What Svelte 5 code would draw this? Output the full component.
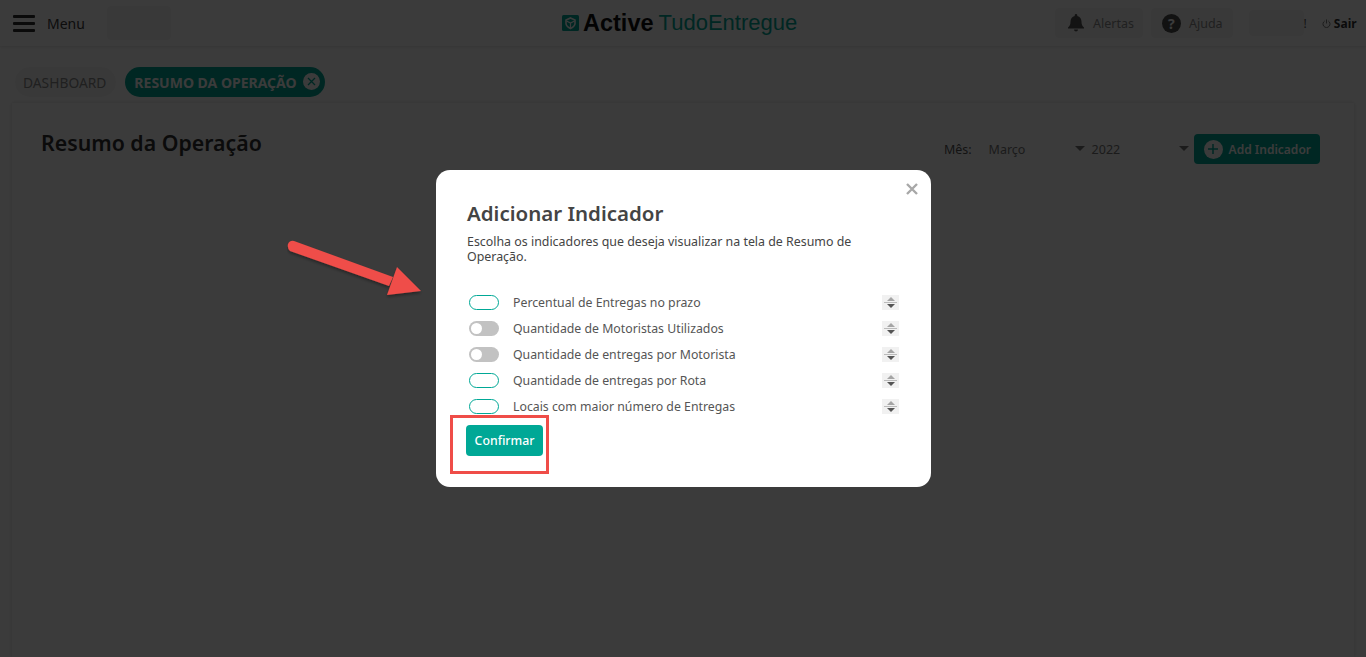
<script>
  const indicadores = [
    { nome: 'Percentual de Entregas no prazo', ativo: true },
    { nome: 'Quantidade de Motoristas Utilizados', ativo: false },
    { nome: 'Quantidade de entregas por Motorista', ativo: false },
    { nome: 'Quantidade de entregas por Rota', ativo: true },
    { nome: 'Locais com maior número de Entregas', ativo: true }
  ];
</script>

<div class="page">
  <header class="topo">
    <div class="esq">
      <span class="burger"><i></i><i></i><i></i></span>
      <span class="menu">Menu</span>
      <span class="borrao b1"></span>
    </div>
    <div class="logo">
      <svg width="17" height="16" viewBox="0 0 17 16">
        <rect width="17" height="16" rx="1.5" fill="#00a896" />
        <path d="M8.500 3l4.500 2v3.500C13 11 10.500 12.500 8.500 13.500 6.500 12.500 4 11 4 8.500V5z" fill="none" stroke="#fff" stroke-width="1.600" />
        <path d="M8.500 8v5M4.500 6l4 2 4-2" fill="none" stroke="#fff" stroke-width="1.200" />
      </svg>
      <b>Active</b><span>TudoEntregue</span>
    </div>
    <div class="dir">
      <span class="acao">
        <svg width="18" height="20" viewBox="0 0 18 20"><path d="M9 1a1.300 1.300 0 0 1 1.300 1.300v.6C13 3.500 14.500 5.800 14.500 8.500c0 3.500 1 4.800 2.500 6v1H1v-1c1.500-1.200 2.500-2.500 2.500-6 0-2.700 1.500-5 4.200-5.600v-.6A1.300 1.300 0 0 1 9 1zM7 16.500h4a2 2 0 0 1-4 0z" fill="#555" /></svg>
        Alertas
      </span>
      <span class="acao ajuda-box">
        <span class="ajuda">?</span>
        Ajuda
      </span>
      <span class="borrao b2"></span>
      <span class="excl">!</span>
      <span class="sair">
        <svg width="9" height="9" viewBox="0 0 10 10"><path d="M3 2.200a3.900 3.900 0 1 0 4 0M5 .5v4.500" fill="none" stroke="#777" stroke-width="1.100" /></svg>
        <b>Sair</b>
      </span>
    </div>
  </header>

  <nav class="abas">
    <span class="aba">DASHBOARD</span>
    <span class="aba atual">
      RESUMO DA OPERAÇÃO
      <span class="fechar-aba">
        <svg width="9" height="9" viewBox="0 0 9 9"><path d="M1 1l7 7M8 1l-7 7" stroke="#00a896" stroke-width="1.300" /></svg>
      </span>
    </span>
  </nav>

  <section class="cartao">
    <h1>Resumo da Operação</h1>
    <div class="filtros">
      <span class="rotulo">Mês:</span>
      <span class="sel mes">Março<i></i></span>
      <span class="sel ano">2022<i></i></span>
      <span class="add">
        <span class="mais">
          <svg width="10" height="10" viewBox="0 0 10 10"><path d="M5 0v10M0 5h10" stroke="#00a896" stroke-width="1.500" /></svg>
        </span>
        Add Indicador
      </span>
    </div>
  </section>
</div>

<div class="overlay"></div>

<div class="modal">
  <span class="fechar">
    <svg width="12" height="12" viewBox="0 0 12 12"><path d="M1 1l10 10M11 1L1 11" stroke="#a8a8a8" stroke-width="2.400" /></svg>
  </span>
  <h2>Adicionar Indicador</h2>
  <p>Escolha os indicadores que deseja visualizar na tela de Resumo de Operação.</p>
  <ul>
    {#each indicadores as item}
      <li>
        <span class="toggle" class:ativo={item.ativo}></span>
        <span class="nome">{item.nome}</span>
        <span class="ordem"><i class="cima"></i><b></b><i class="baixo"></i></span>
      </li>
    {/each}
  </ul>
  <button>Confirmar</button>
</div>

<!-- anotacoes em vermelho por cima do print -->
<span class="marca"></span>
<svg class="seta" width="150" height="70" viewBox="0 0 150 70">
  <defs>
    <filter id="sombra" x="-10%" y="-20%" width="120%" height="150%">
      <feDropShadow dx="0" dy="2" stdDeviation="1.500" flood-color="#000" flood-opacity="0.35" />
    </filter>
  </defs>
  <g filter="url(#sombra)" fill="#ef4d48">
    <path d="M7 1L106 37 102 46 3 11Q0 8 1 4 3 0 7 1z" />
    <path d="M110 27L134 51 100 55z" />
  </g>
</svg>

<style>
  :global(body) {
    margin: 0;
    font-family: "Noto Sans", "Open Sans", sans-serif;
    background: #fff;
    overflow: hidden;
  }

  .page {
    height: 657px;
    display: flex;
    flex-direction: column;
    background: #fff;
  }

  .topo {
    height: 46px;
    display: flex;
    align-items: center;
    box-shadow: 0 1px 3px rgba(0, 0, 0, 0.12);
    position: relative;
  }

  .esq {
    width: 562px;
    display: flex;
    align-items: center;
    padding-left: 13px;
    box-sizing: border-box;
  }

  .burger {
    width: 22px;
    display: flex;
    flex-direction: column;
    gap: 4px;
    margin-right: 12px;
  }

  .burger i {
    height: 3px;
    background: #2c2c2c;
    border-radius: 1px;
  }

  .menu {
    font-size: 14px;
    color: #3a3a3a;
  }

  .borrao {
    display: block;
    background: #f7f7f7;
    border-radius: 4px;
  }

  .b1 {
    width: 64px;
    height: 34px;
    margin-left: 22px;
  }

  .b2 {
    width: 55px;
    height: 26px;
    margin-left: 16px;
  }

  .logo {
    display: flex;
    align-items: center;
    gap: 4px;
    font-family: "Liberation Sans", sans-serif;
    font-size: 22px;
  }

  .logo b {
    color: #0f0f0f;
    font-weight: 700;
    font-size: 23.500px;
  }

  .logo span {
    color: #00a896;
    margin-left: 1px;
  }

  .dir {
    margin-left: auto;
    width: 311px;
    display: flex;
    align-items: center;
  }

  .acao {
    display: flex;
    align-items: center;
    gap: 8px;
    height: 30px;
    background: #f7f7f7;
    border-radius: 4px;
    padding: 0 9px 0 12px;
    margin-right: 8px;
    font-size: 12.500px;
    color: #8a8a8a;
  }

  .ajuda-box {
    padding: 0 10px 0 11px;
    margin-right: 0;
  }

  .ajuda {
    width: 19px;
    height: 19px;
    border-radius: 50%;
    background: #4e4e4e;
    color: #fff;
    font-size: 14px;
    font-weight: 700;
    display: flex;
    align-items: center;
    justify-content: center;
  }

  .excl {
    font-size: 12px;
    color: #555;
    margin-right: 15px;
  }

  .sair {
    display: flex;
    align-items: center;
    gap: 3px;
    font-size: 12px;
  }

  .sair b {
    color: #333;
  }

  .abas {
    display: flex;
    gap: 9px;
    padding: 21px 0 0 15px;
  }

  .aba {
    height: 30px;
    box-sizing: border-box;
    display: flex;
    align-items: center;
    padding: 1px 10px 0 8px;
    border-radius: 15px;
    background: #f7f7f7;
    color: #8a8a8a;
    font-size: 13.800px;
  }

  .atual {
    background: #00a896;
    color: #fff;
    font-weight: 700;
    font-size: 14px;
    gap: 6px;
    padding: 1px 5px 0 9px;
  }

  .fechar-aba {
    width: 17px;
    height: 17px;
    border-radius: 50%;
    background: #fff;
    display: flex;
    align-items: center;
    justify-content: center;
    margin-bottom: 2px;
  }

  .cartao {
    flex: 1;
    margin: 6px 12px 0 12px;
    box-shadow: 0 0 4px rgba(0, 0, 0, 0.15);
    display: flex;
    justify-content: space-between;
    align-items: flex-start;
    padding: 25px 34px 0 29px;
  }

  h1 {
    margin: 0;
    font-size: 21.300px;
    font-weight: 600;
    color: #333;
  }

  .filtros {
    display: flex;
    align-items: center;
    margin-top: 6px;
    font-size: 12.500px;
    color: #666;
  }

  .rotulo {
    margin-right: 17px;
    color: #555;
  }

  .sel {
    display: flex;
    align-items: center;
    justify-content: space-between;
    color: #777;
  }

  .sel i {
    border-left: 5px solid transparent;
    border-right: 5px solid transparent;
    border-top: 5px solid #777;
    margin-bottom: 2px;
  }

  .mes {
    width: 96px;
    margin-right: 7px;
  }

  .ano {
    width: 97px;
    margin-right: 5px;
  }

  .add {
    height: 30px;
    display: flex;
    align-items: center;
    gap: 6px;
    background: #00a896;
    color: #fff;
    border-radius: 4px;
    padding: 0 9px 0 10px;
    font-weight: 600;
    font-size: 12px;
  }

  .mais {
    width: 19px;
    height: 19px;
    border-radius: 50%;
    background: #fff;
    display: flex;
    align-items: center;
    justify-content: center;
  }

  .overlay {
    position: fixed;
    inset: 0;
    background: rgba(0, 0, 0, 0.77);
  }

  .modal {
    position: fixed;
    left: 436px;
    top: 170px;
    width: 495px;
    height: 317px;
    box-sizing: border-box;
    background: #fff;
    border-radius: 14px;
    padding: 30px 31px 0;
    color: #444;
  }

  .fechar {
    position: absolute;
    top: 13px;
    right: 13px;
    line-height: 0;
  }

  h2 {
    margin: 0;
    font-size: 20.500px;
    line-height: 26px;
    font-weight: 600;
    color: #444;
  }

  p {
    margin: 8px 0 0;
    font-size: 12.400px;
    line-height: 15px;
    color: #444;
  }

  ul {
    list-style: none;
    margin: 25px 1px 0 0;
    padding: 0;
  }

  li {
    height: 26px;
    display: flex;
    align-items: center;
    padding-left: 2px;
    font-size: 12.300px;
    color: #555;
  }

  .toggle {
    width: 30px;
    height: 15px;
    box-sizing: border-box;
    border-radius: 8px;
    background: #c2c2c2;
    position: relative;
    margin-right: 14px;
  }

  .toggle::after {
    content: "";
    position: absolute;
    left: 2px;
    top: 2px;
    width: 11px;
    height: 11px;
    border-radius: 50%;
    background: #fff;
  }

  .toggle.ativo {
    background: #fff;
    border: 1px solid #00a896;
  }

  .toggle.ativo::after {
    display: none;
  }

  .nome {
    flex: 1;
  }

  .ordem {
    width: 17px;
    height: 15px;
    background: #f1f1f1;
    display: flex;
    flex-direction: column;
    align-items: center;
    justify-content: center;
  }

  .ordem b {
    display: block;
    width: 13px;
    height: 1px;
    margin: 1px 0;
    background: #bbb;
  }

  .ordem i {
    border-left: 4.500px solid transparent;
    border-right: 4.500px solid transparent;
  }

  .cima {
    border-bottom: 4px solid #a5a5a5;
  }

  .baixo {
    border-top: 4px solid #555;
  }

  button {
    display: block;
    margin: 6px 0 0 -1px;
    width: 77px;
    height: 31px;
    border: none;
    border-radius: 4px;
    background: #00a896;
    color: #fff;
    font-family: inherit;
    font-size: 12.300px;
    font-weight: 500;
    padding: 0;
  }

  .marca {
    position: fixed;
    left: 450px;
    top: 415px;
    width: 99px;
    height: 59px;
    box-sizing: border-box;
    border: 3px solid #ef4d48;
  }

  .seta {
    position: fixed;
    left: 287px;
    top: 240px;
  }
</style>
